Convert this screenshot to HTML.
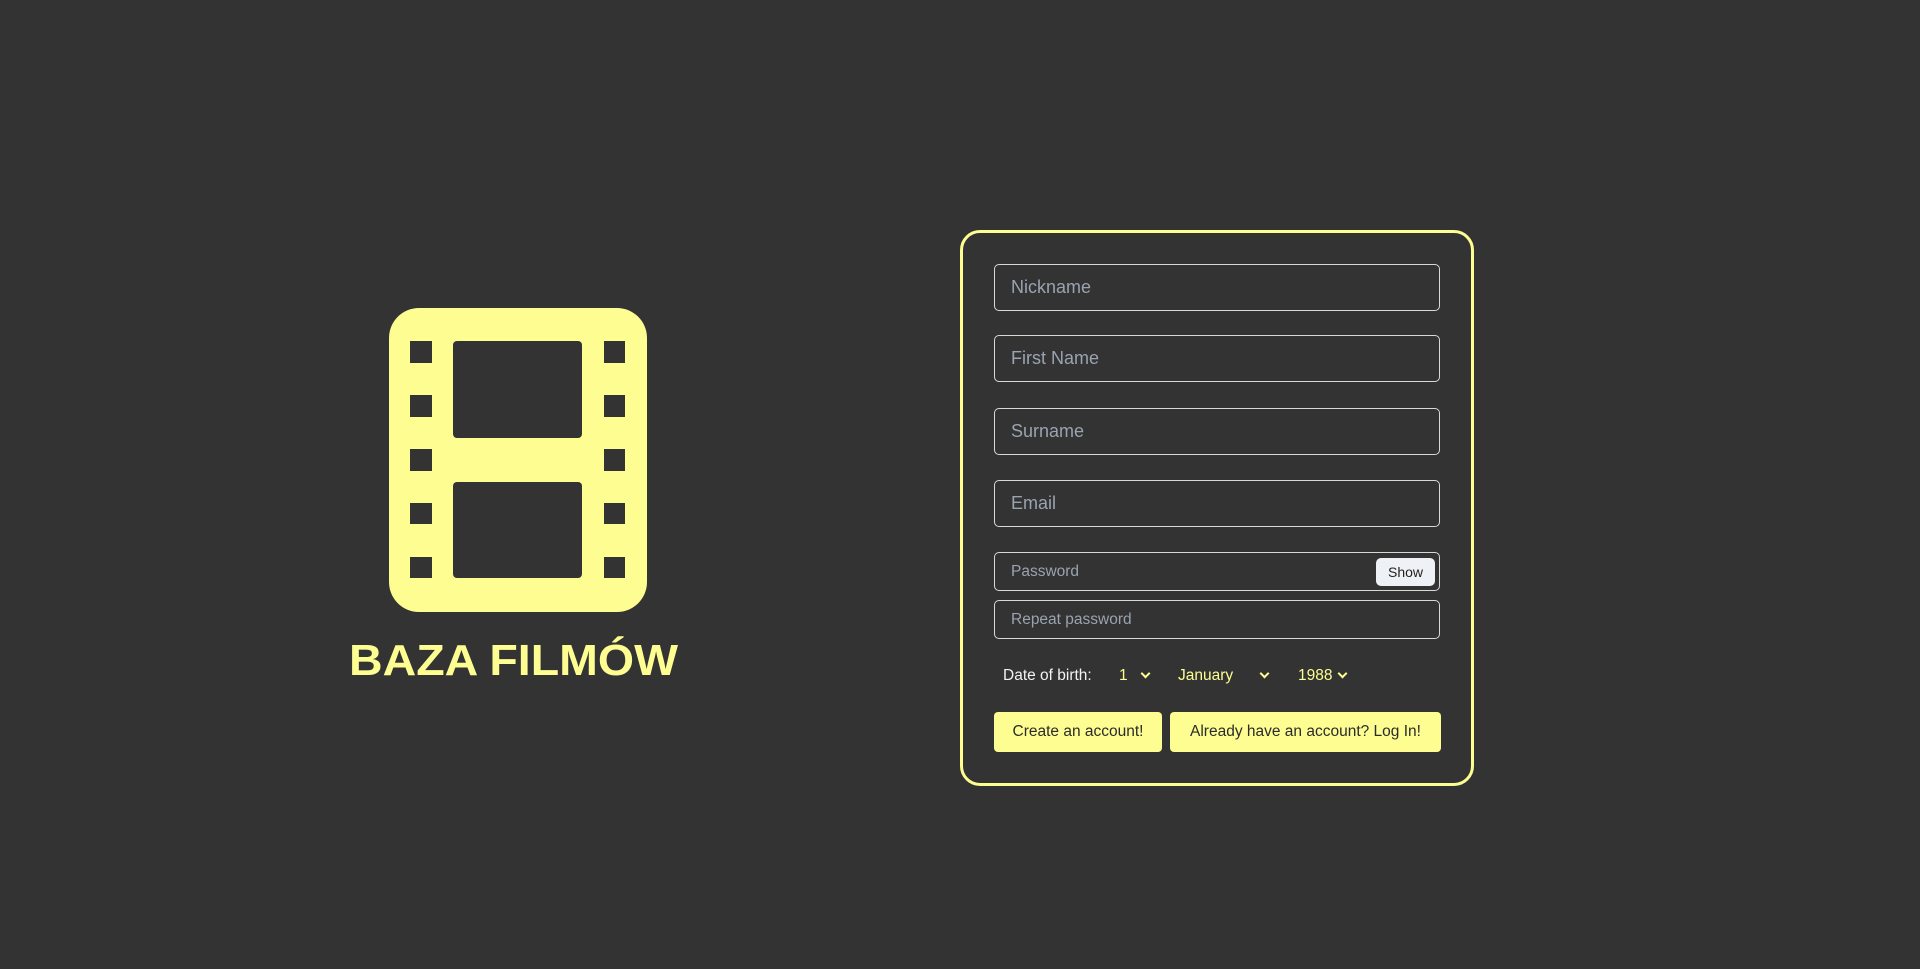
<!DOCTYPE html>
<html><head><meta charset="utf-8"><style>
*{box-sizing:border-box;margin:0;padding:0}
body{width:1920px;height:969px;background:#333333;font-family:"Liberation Sans",sans-serif;position:relative;overflow:hidden}
.a{position:absolute}
.card{left:960px;top:230px;width:514px;height:556px;border:3px solid #fdfd91;border-radius:20px}
.in{border:1px solid #d8d8d8;border-radius:5px;color:#9aa3b0;padding-left:16px;display:flex;align-items:center}
.big{height:47px;font-size:18px}
.sm{height:39px;font-size:15.5px}
.btn{background:#fdfd91;color:#2b2b2b;border-radius:4px;font-size:15.5px;display:flex;align-items:center;justify-content:center;height:40px;top:712px}
.y{color:#fdfd91;font-size:15.5px;top:667px}
.chev{width:7px;height:7px;border-right:2px solid #fdfd91;border-bottom:2px solid #fdfd91;transform:rotate(45deg);top:670px}
</style></head><body>
<svg class="a" style="left:0;top:0" width="800" height="969">
<rect x="389" y="308" width="258" height="304" rx="30" fill="#fdfd91"/>
<g fill="#333">
<rect x="410" y="341" width="22" height="22"/><rect x="410" y="395" width="22" height="22"/><rect x="410" y="449" width="22" height="22"/><rect x="410" y="503" width="22" height="21"/><rect x="410" y="557" width="22" height="21"/>
<rect x="604" y="341" width="21" height="22"/><rect x="604" y="395" width="21" height="22"/><rect x="604" y="449" width="21" height="22"/><rect x="604" y="503" width="21" height="21"/><rect x="604" y="557" width="21" height="21"/>
<rect x="453" y="341" width="129" height="97" rx="4"/><rect x="453" y="482" width="129" height="96" rx="4"/>
</g>
<text x="349" y="675" font-family="Liberation Sans,sans-serif" font-weight="bold" font-size="44" fill="#fdfd91" textLength="329" lengthAdjust="spacingAndGlyphs">BAZA FILMÓW</text>
</svg>
<div class="a card"></div>
<div class="a in big" style="left:994px;top:264px;width:446px">Nickname</div>
<div class="a in big" style="left:994px;top:335px;width:446px">First Name</div>
<div class="a in big" style="left:994px;top:408px;width:446px">Surname</div>
<div class="a in big" style="left:994px;top:480px;width:446px">Email</div>
<div class="a in sm" style="left:994px;top:552px;width:446px">Password</div>
<div class="a" style="left:1376px;top:558px;width:59px;height:28px;background:#eef2f7;border-radius:5px;font-size:14px;color:#222;display:flex;align-items:center;justify-content:center">Show</div>
<div class="a in sm" style="left:994px;top:600px;width:446px">Repeat password</div>
<div class="a" style="left:1003px;top:667px;color:#f2f2f2;font-size:15.5px">Date of birth:</div>
<div class="a y" style="left:1119px">1</div><div class="a chev" style="left:1142px"></div>
<div class="a y" style="left:1178px">January</div><div class="a chev" style="left:1261px"></div>
<div class="a y" style="left:1298px">1988</div><div class="a chev" style="left:1339px"></div>
<div class="a btn" style="left:994px;width:168px">Create an account!</div>
<div class="a btn" style="left:1170px;width:271px">Already have an account? Log In!</div>
</body></html>
